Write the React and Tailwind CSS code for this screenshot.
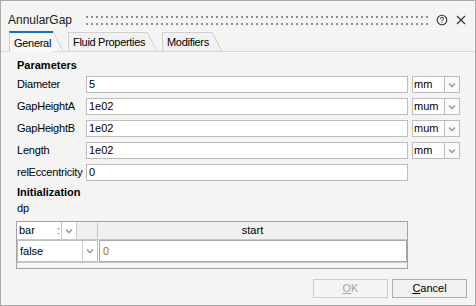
import React from "react";

function Chevron() {
  return (
    <svg width="8" height="6" viewBox="0 0 8 6" className="block">
      <path d="M1 1.5 L4 4.5 L7 1.5" fill="none" stroke="#9d9d9d" strokeWidth="1.6" />
    </svg>
  );
}

function Tab({ label, width, selected }) {
  return (
    <div className={`flex items-end ${selected ? "h-[21px] relative z-10 -mb-px" : "h-[19px]"}`}>
      <div
        className={`h-full flex items-center pl-[4px] whitespace-nowrap tracking-[-0.3px] border-l border-[#cfcfcf] ${
          selected ? "bg-[#f7f7f7] border-t-2 border-t-[#1a6fa8] pt-[1px]" : "bg-[#f2f2f2] border-t border-t-[#cfcfcf]"
        } ${width}`}
      >
        {label}
      </div>
      <svg width="10" height={selected ? 21 : 19} className="block shrink-0">
        <path d={selected ? "M0 0 L10 20 L0 20 Z" : "M0 0 L10 19 L0 19 Z"} fill={selected ? "#f7f7f7" : "#f2f2f2"} />
        <path d={selected ? "M0 0.5 L10 20" : "M0 0.5 L10 19"} stroke="#cfcfcf" strokeWidth="1" fill="none" />
      </svg>
    </div>
  );
}

const params = [
  { label: "Diameter", value: "5", unit: "mm" },
  { label: "GapHeightA", value: "1e02", unit: "mum" },
  { label: "GapHeightB", value: "1e02", unit: "mum" },
  { label: "Length", value: "1e02", unit: "mm" },
  { label: "relEccentricity", value: "0" },
];

export default function App() {
  return (
    <div className="w-[476px] h-[306px] bg-[#f4f4f4] border border-[#a9a9a9] flex flex-col text-[11px] leading-[13px] text-black font-['Liberation_Sans',Arial,sans-serif]">
      {/* Title bar */}
      <div className="h-[30px] pt-[8px] flex items-center pl-[7px] pr-[9px]">
        <span className="text-[12px] leading-[14px] text-[#1a1a1a] w-[78px]">AnnularGap</span>
        <svg className="flex-1 h-[9px] block" height="9">
          <defs>
            <pattern id="grip" width="5" height="9" patternUnits="userSpaceOnUse">
              <rect x="0" y="0" width="2" height="2" fill="#8f8f8f" />
              <rect x="0" y="7" width="2" height="2" fill="#8f8f8f" />
            </pattern>
          </defs>
          <rect width="100%" height="9" fill="url(#grip)" />
        </svg>
        <svg width="12" height="12" viewBox="0 0 12 12" className="ml-[7px] block">
          <circle cx="6" cy="6" r="4.8" fill="none" stroke="#333" strokeWidth="1.1" />
          <path d="M4.4 4.8 Q4.4 3.3 6 3.3 Q7.6 3.3 7.6 4.7 Q7.6 5.6 6.4 6 Q6 6.2 6 7" fill="none" stroke="#333" strokeWidth="1" />
          <rect x="5.5" y="7.8" width="1" height="1" fill="#333" />
        </svg>
        <svg width="10" height="10" viewBox="0 0 10 10" className="ml-[8px] block">
          <path d="M1 1 L9 9 M9 1 L1 9" stroke="#333" strokeWidth="1.1" />
        </svg>
      </div>

      {/* Tabs */}
      <div className="h-[21px] flex items-end pl-[8px] border-b border-[#d6d6d6]">
        <Tab label="General" width="w-[44px]" selected />
        <div className="w-[5px]" />
        <Tab label="Fluid Properties" width="w-[79px]" />
        <div className="w-[5px]" />
        <Tab label="Modifiers" width="w-[50px]" />
      </div>

      {/* Panel */}
      <div className="flex-1 flex flex-col pl-[15px] pr-[8px] pt-[7px] bg-[#f4f4f4]">
        <div className="font-bold pl-[1px]">Parameters</div>
        <div className="mt-[4px] flex flex-col gap-[5px]">
          {params.map((p) => (
            <div key={p.label} className="h-[17px] flex items-center">
              <div className="w-[70px] pl-[1px] tracking-[-0.2px] whitespace-nowrap">{p.label}</div>
              <div className="w-[322px] h-full bg-white border border-[#bcbcbc] pl-[2px] flex items-center">{p.value}</div>
              {p.unit && (
                <div className="ml-[4px] flex h-full">
                  <div className="w-[33px] h-full bg-white border border-[#bcbcbc] pl-[1px] flex items-center">{p.unit}</div>
                  <div className="w-[15px] h-full bg-[#fafafa] border border-l-0 border-[#bcbcbc] flex items-center justify-center">
                    <Chevron />
                  </div>
                </div>
              )}
            </div>
          ))}
        </div>

        <div className="mt-[5px] font-bold pl-[1px]">Initialization</div>
        <div className="mt-[3px] pl-[1px]">dp</div>

        {/* Table */}
        <div className="mt-[6px] w-[392px] h-[48px] border border-[#a3a3a3] bg-[#f0f0f0] flex flex-col">
          <div className="h-[18px] flex border-b border-[#c9c9c9]">
            <div className="w-[45px] bg-white border-r border-[#c9c9c9] pl-[2px] flex items-center relative">
              bar
              <span className="absolute right-[1px] top-[2px] text-[#555]">:</span>
            </div>
            <div className="w-[15px] bg-white border-r border-[#c9c9c9] flex items-center justify-center">
              <Chevron />
            </div>
            <div className="w-[21px] border-r border-[#c9c9c9]" />
            <div className="flex-1 flex items-center justify-center">start</div>
          </div>
          <div className="h-[23px] flex bg-white border-b border-[#c9c9c9]">
            <div className="w-[81px] flex border border-[#c0c0c0]">
              <div className="w-[65px] pl-[2px] flex items-center border-r border-[#c9c9c9]">false</div>
              <div className="flex-1 flex items-center justify-center">
                <Chevron />
              </div>
            </div>
            <div className="flex-1 ml-[1px] border border-[#a8a8a8] pl-[3px] flex items-center text-[#b0620c]">0</div>
          </div>
          <div className="flex-1 bg-[#f7f7f7]" />
        </div>

        {/* Buttons */}
        <div className="mt-[10px] flex justify-end gap-[4px]">
          <div className="w-[75px] h-[19px] border border-[#cccccc] bg-[#f4f4f4] text-[#a3a3a3] flex items-center justify-center">
            <span><span className="underline">O</span>K</span>
          </div>
          <div className="w-[75px] h-[19px] border border-[#adadad] bg-[#f1f1f1] flex items-center justify-center">
            <span><span className="underline">C</span>ancel</span>
          </div>
        </div>
      </div>
    </div>
  );
}
